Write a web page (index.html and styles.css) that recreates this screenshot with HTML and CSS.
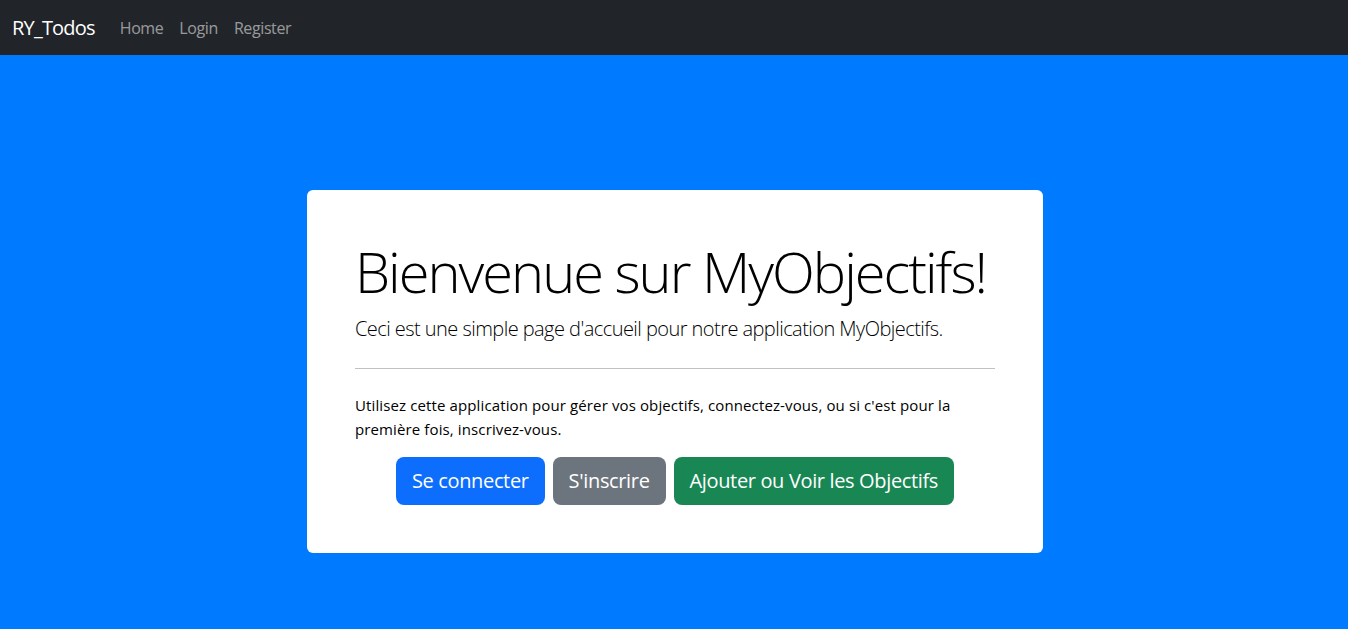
FILE: index.html
```html
<!DOCTYPE html>
<html lang="fr">
<head>
<meta charset="utf-8">
<title>RY_Todos</title>
<link rel="stylesheet" href="styles.css">
</head>
<body>
<nav class="navbar">
  <a class="brand" href="#">RY_Todos</a>
  <ul class="nav">
    <li><a class="nav-link" href="#">Home</a></li>
    <li><a class="nav-link" href="#">Login</a></li>
    <li><a class="nav-link" href="#">Register</a></li>
  </ul>
</nav>
<main class="main">
  <div class="card">
    <h1 class="display">Bienvenue sur MyObjectifs!</h1>
    <p class="lead">Ceci est une simple page d'accueil pour notre application MyObjectifs.</p>
    <hr class="divider">
    <p class="text">Utilisez cette application pour gérer vos objectifs, connectez-vous, ou si c'est pour la première fois, inscrivez-vous.</p>
    <div class="actions">
      <a class="btn btn-primary" href="#">Se connecter</a>
      <a class="btn btn-secondary" href="#">S'inscrire</a>
      <a class="btn btn-success" href="#">Ajouter ou Voir les Objectifs</a>
    </div>
  </div>
</main>
</body>
</html>
```
FILE: styles.css
```css
* { box-sizing: border-box; }
html, body { margin: 0; padding: 0; }
body {
  font-family: "Open Sans", "Noto Sans", "Liberation Sans", sans-serif;
  font-size: 16px;
  line-height: 1.5;
  color: #212529;
  background: #007bff;
  min-height: 100vh;
}
.navbar {
  height: 55px;
  background: #212529;
  display: flex;
  align-items: center;
  padding: 0 12px;
}
.brand {
  color: #fff;
  font-size: 20px;
  text-decoration: none;
  margin-right: 17px;
  line-height: 30px;
  letter-spacing: -0.8px;
}
.nav {
  display: flex;
  list-style: none;
  margin: 0;
  padding: 0;
}
.nav-link {
  display: block;
  padding: 8px;
  color: rgba(255, 255, 255, 0.55);
  text-decoration: none;
  letter-spacing: -0.4px;
}
.main {
  padding-top: 135px;
  padding-bottom: 40px;
  padding-left: 2px;
}
.card {
  width: 736px;
  margin: 0 auto;
  background: #fff;
  border-radius: 6px;
  padding: 48px;
}
.display {
  font-size: 56px;
  font-weight: 300;
  line-height: 1.2;
  margin: 0 0 9px;
  color: #000;
  letter-spacing: -2px;
  white-space: nowrap;
}
.lead {
  font-size: 20px;
  font-weight: 300;
  margin: 0 0 16px;
  color: #000;
  letter-spacing: -0.55px;
}
.divider {
  margin: 24px 0;
  border: 0;
  border-top: 1px solid #c1c1c1;
  height: 0;
}
.text {
  margin: 0 0 16px;
  color: #000;
  font-size: 15px;
  line-height: 24px;
  letter-spacing: 0.12px;
}
.actions {
  display: flex;
  justify-content: center;
  gap: 8px;
}
.btn {
  display: inline-block;
  font-size: 20px;
  line-height: 30px;
  padding: 9px 16px;
  border-radius: 8px;
  color: #fff;
  text-decoration: none;
  letter-spacing: -0.35px;
}
.btn-primary { background: #0d6efd; }
.btn-secondary { background: #6c757d; }
.btn-success { background: #198754; }
```
